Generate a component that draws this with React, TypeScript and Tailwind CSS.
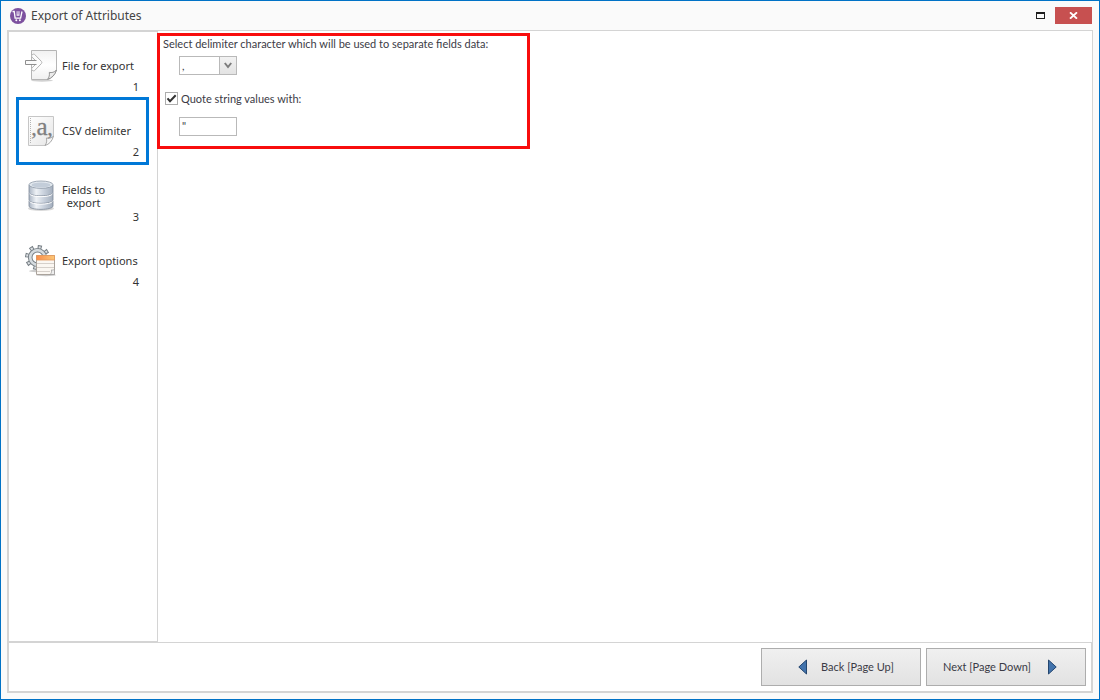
import type { ReactNode } from "react";

function AppLogo() {
  return (
    <svg width="16" height="16" viewBox="0 0 16 16" aria-hidden="true">
      <circle cx="8" cy="8" r="8" fill="#7d519f" />
      <path d="M2.500 3.500h1.700l.9 6.700h5.500l1.400-6.700" fill="none" stroke="#fff" strokeWidth="1.300" />
      <path d="M6.600 3.200h2.900v4.600H6.600z" fill="#efe6f6" />
      <path d="M8 3v3.500" stroke="#7d519f" strokeWidth=".8" />
      <circle cx="6.300" cy="12.200" r="1" fill="#fff" />
      <circle cx="9.900" cy="12.200" r="1" fill="#fff" />
    </svg>
  );
}

function FileIcon() {
  return (
    <svg width="32" height="32" viewBox="0 0 32 32" aria-hidden="true">
      <defs>
        <linearGradient id="page" x1="0" y1="0" x2="0" y2="1">
          <stop offset="0" stopColor="#f1f1f1" />
          <stop offset=".5" stopColor="#fff" />
          <stop offset="1" stopColor="#f0f0f0" />
        </linearGradient>
      </defs>
      <ellipse cx="17" cy="30.500" rx="11" ry="1.200" fill="#000" opacity=".18" />
      <path d="M6.500.5h25v19.300c-1.500 5-4.500 8.500-9 9.700h-16z" fill="url(#page)" stroke="#b5b5b5" />
      <path d="M22.500 29.400c1.700-2 2.200-4.300 1.800-7 2.300.5 5 .1 7.200-2.400-1.500 4.800-4.500 8-9 9.400z" fill="#ececec" stroke="#8a8a8a" strokeWidth=".9" />
      <path d="M10.500 10.500L6.700 6.800c-.6-1.600 1-3.200 2.700-2.600l7 7.200c.6.700.6 1.500 0 2.200l-7 7.200c-1.700.6-3.300-1-2.700-2.600l3.800-3.700" fill="#fcfcfc" stroke="#b4b4b4" strokeWidth="1" />
      <path d="M.5 10.500h11v4H.5z" fill="#fafafa" />
      <path d="M11.500 10.500H.5v4h11" fill="none" stroke="#8e8e8e" />
    </svg>
  );
}

function DelimiterIcon() {
  return (
    <svg className="overflow-visible" width="32" height="32" viewBox="0 0 32 32" aria-hidden="true">
      <defs>
        <linearGradient id="sheet" x1="0" y1="0" x2="1" y2="1">
          <stop offset="0" stopColor="#fff" />
          <stop offset=".75" stopColor="#ececec" />
          <stop offset="1" stopColor="#ddd" />
        </linearGradient>
      </defs>
      <path d="M3.500 1.500h25v19.800L20 30.500H3.500z" fill="url(#sheet)" stroke="#c6c6c6" />
      <path d="M5.500 3v26" stroke="#b4b4b4" strokeDasharray="1 1" />
      <path d="M20 30.500c1.800-2.400 2-4.800 1.400-7.500 2.500.6 5 .2 7.100-1.700-1.500 4.900-4.200 8-8.500 9.200z" fill="#f6f6f6" stroke="#a0a0a0" strokeWidth=".9" />
      <g fontFamily="Liberation Serif, serif" fontSize="22" fill="#7f7f7f" stroke="#7f7f7f" strokeWidth=".3" textAnchor="middle">
        <text x="9" y="20">,</text>
        <text x="17" y="20" fontSize="25">a</text>
        <text x="25" y="20">,</text>
      </g>
    </svg>
  );
}

function DatabaseIcon() {
  return (
    <svg width="32" height="32" viewBox="0 0 32 32" aria-hidden="true">
      <defs>
        <linearGradient id="drum" x1="0" y1="0" x2="1" y2="0">
          <stop offset="0" stopColor="#a9b4c3" />
          <stop offset=".3" stopColor="#eef2f6" />
          <stop offset=".6" stopColor="#cbd3de" />
          <stop offset="1" stopColor="#a3aebd" />
        </linearGradient>
      </defs>
      <ellipse cx="16" cy="28.500" rx="13" ry="2.500" fill="#000" opacity=".15" />
      <path d="M4 21v5c0 4.500 24 4.500 24 0v-5z" fill="url(#drum)" stroke="#7e8998" strokeWidth=".8" />
      <path d="M4 13v7c0 4.500 24 4.500 24 0v-7z" fill="url(#drum)" stroke="#7e8998" strokeWidth=".8" />
      <path d="M4 5v7.500c0 4.500 24 4.500 24 0V5z" fill="url(#drum)" stroke="#7e8998" strokeWidth=".8" />
      <path d="M4.500 13.800c1.500 3.800 21.500 3.800 23 0M4.500 21.300c1.500 3.800 21.500 3.800 23 0" fill="none" stroke="#fff" strokeWidth="1" />
      <ellipse cx="16" cy="4.700" rx="12" ry="3.700" fill="#e3e9ef" stroke="#8e99a7" strokeWidth=".8" />
      <ellipse cx="16" cy="5" rx="9.500" ry="2.400" fill="#c3cdd9" />
    </svg>
  );
}

const TEETH = [0, 45, 90, 135, 180, 225, 270, 315];

function OptionsIcon() {
  return (
    <svg width="32" height="32" viewBox="0 0 32 32" aria-hidden="true">
      <defs>
        <linearGradient id="band" x1="0" y1="0" x2="1" y2="0">
          <stop offset="0" stopColor="#f98d4b" />
          <stop offset="1" stopColor="#fcc777" />
        </linearGradient>
      </defs>
      <ellipse cx="11" cy="26" rx="7" ry="1.200" fill="#000" opacity=".2" />
      <ellipse cx="21" cy="30" rx="10" ry="1.200" fill="#000" opacity=".2" />
      {TEETH.map((a) => (
        <path key={a} d="M11.200 4.200L10.800.6h3.400l-.4 3.600z" transform={`rotate(${a + 12} 12.500 12.500)`} fill="#dfe3e6" stroke="#767e84" strokeWidth="1" />
      ))}
      <circle cx="12.500" cy="12.500" r="7.300" fill="none" stroke="#767e84" strokeWidth="4.600" />
      <circle cx="12.500" cy="12.500" r="7.300" fill="none" stroke="#d5dbdf" strokeWidth="2.700" />
      <path d="M11.500 10.500h18v19h-18z" fill="#fbf7f2" stroke="#aaa39c" />
      <path d="M11.500 10.500h18v4.500h-18z" fill="url(#band)" stroke="#e3985a" strokeWidth=".8" />
      <path d="M12 18.500h17M12 22.500h17M12 26.500h13" stroke="#d6d0ca" />
      <path d="M25 29.500c1.600-1.400 1.800-3 1.400-4.600 1.200.3 2.200.1 3.100-.6v5.200z" fill="#eee" stroke="#999" strokeWidth=".7" />
    </svg>
  );
}

type Step = { lines: string[]; icon: ReactNode; active?: boolean };

const STEPS: Step[] = [
  { lines: ["File for export"], icon: <FileIcon /> },
  { lines: ["CSV delimiter"], icon: <DelimiterIcon />, active: true },
  { lines: ["Fields to", "export"], icon: <DatabaseIcon /> },
  { lines: ["Export options"], icon: <OptionsIcon /> },
];

function StepButton({ step, number }: { step: Step; number: number }) {
  return (
    <button
      type="button"
      aria-current={step.active ? "step" : undefined}
      className={`flex w-full flex-col pt-[15px] pb-[5px] pl-[6px] text-[11px] leading-[13px] ${step.active ? "outline-3 outline-[#0078d7]" : ""}`}
    >
      <span className="flex h-8 gap-[5px]">
        {step.icon}
        <span className="flex h-[31px] flex-col justify-center whitespace-nowrap text-center">
          {step.lines.map((line) => (
            <span key={line}>{line}</span>
          ))}
        </span>
      </span>
      <span className="self-end pr-[7px] leading-[10px]">{number}</span>
    </button>
  );
}

const NAV_BUTTON =
  "flex h-[38px] w-40 items-center border border-[#adadad] bg-linear-to-b from-[#f0f0f0] to-[#e2e2e2]";

export default function App() {
  return (
    <div className="flex min-h-screen flex-col border border-[#0072c6] bg-[#fafafa] font-['Lato',sans-serif] text-[11px] text-[#3b3b46]">
      <header className="flex h-[29px] items-center pr-[7px] pl-[9px]">
        <AppLogo />
        <h1 className="ml-[5px] font-['Noto_Sans',sans-serif] text-[12px] leading-4 text-[#444]">Export of Attributes</h1>
        <button type="button" aria-label="Maximize" className="ml-auto p-[5px]">
          <span className="block h-[7px] w-[9px] border border-t-2 border-[#1e1e1e]" />
        </button>
        <button type="button" aria-label="Close" className="ml-[5px] flex h-[17px] w-[37px] items-center justify-center bg-[#c75050]">
          <svg width="9" height="7" viewBox="0 0 9 7" aria-hidden="true">
            <path d="M1 .3l7 6.400M8 .3L1 6.700" stroke="#fff" strokeWidth="1.800" />
          </svg>
        </button>
      </header>

      <div className="mx-[6px] mb-[6px] flex grow flex-col">
        <div className="flex grow">
          <nav className="flex w-[151px] flex-col gap-[3px] border-2 border-r border-b border-[#d4d4d4] bg-white pt-[3px] pr-[11px] pl-[10px] font-['Noto_Sans',sans-serif] text-[#333]">
            {STEPS.map((step, i) => (
              <StepButton key={step.lines[0]} step={step} number={i + 1} />
            ))}
          </nav>

          <main className="grow border-t border-r border-[#d4d4d4] bg-white pt-[2px]">
            <form className="relative -ml-px flex h-[116px] w-[373px] flex-col border-3 border-[#f80d0d] pl-[3px]">
              <label htmlFor="delimiter" className="h-5 leading-4">
                Select delimiter character which will be used to separate fields data:
              </label>
              <div className="relative ml-4 h-[19px] w-[58px]">
                <select id="delimiter" defaultValue="," className="block size-full appearance-none border border-[#b9b9b9] bg-white pl-[2px] text-[11px] leading-4">
                  <option>,</option>
                  <option>;</option>
                  <option>|</option>
                </select>
                <span className="pointer-events-none absolute inset-y-0 right-0 flex w-[18px] items-center justify-center border border-[#b9b9b9] bg-linear-to-b from-[#f2f2f2] to-[#e3e3e3]">
                  <svg width="8" height="7" viewBox="0 0 8 7" aria-hidden="true">
                    <path d="M.8 1l3.200 4 3.200-4" fill="none" stroke="#7c7c7c" strokeWidth="2" />
                  </svg>
                </span>
              </div>
              <label className="mt-[15px] ml-[2px] flex h-4 items-center gap-[3px] self-start leading-4">
                <span className="relative flex size-[13px]">
                  <input type="checkbox" defaultChecked className="peer size-[13px] appearance-none border border-[#adadad] bg-white" />
                  <svg className="pointer-events-none invisible absolute inset-0 peer-checked:visible" width="13" height="13" viewBox="0 0 13 13" aria-hidden="true">
                    <path d="M2.500 6.300L5 9.200l5.700-6" fill="none" stroke="#333" strokeWidth="2" />
                  </svg>
                </span>
                <span className="pt-[2px]">Quote string values with:</span>
              </label>
              <input
                type="text"
                aria-label="Quote character"
                defaultValue={'"'}
                className="mt-[11px] ml-4 h-[19px] w-[58px] border border-[#b9b9b9] bg-white px-[2px] pb-[2px] leading-4"
              />
            </form>
          </main>
        </div>

        <footer className="flex justify-end gap-[5px] border-2 border-t border-[#d4d4d4] bg-white p-[5px]">
          <button type="button" className={`${NAV_BUTTON} gap-[13px] pl-[36px]`}>
            <svg width="10" height="16" viewBox="0 0 10 16" aria-hidden="true">
              <path d="M8.500 1v14L.8 8z" fill="#4273ac" stroke="#24466f" strokeLinejoin="round" />
            </svg>
            Back [Page Up]
          </button>
          <button type="button" className={`${NAV_BUTTON} justify-between pr-[28px] pl-4`}>
            Next [Page Down]
            <svg width="10" height="16" viewBox="0 0 10 16" aria-hidden="true">
              <path d="M1.500 1v14L9.200 8z" fill="#4273ac" stroke="#24466f" strokeLinejoin="round" />
            </svg>
          </button>
        </footer>
      </div>
    </div>
  );
}
